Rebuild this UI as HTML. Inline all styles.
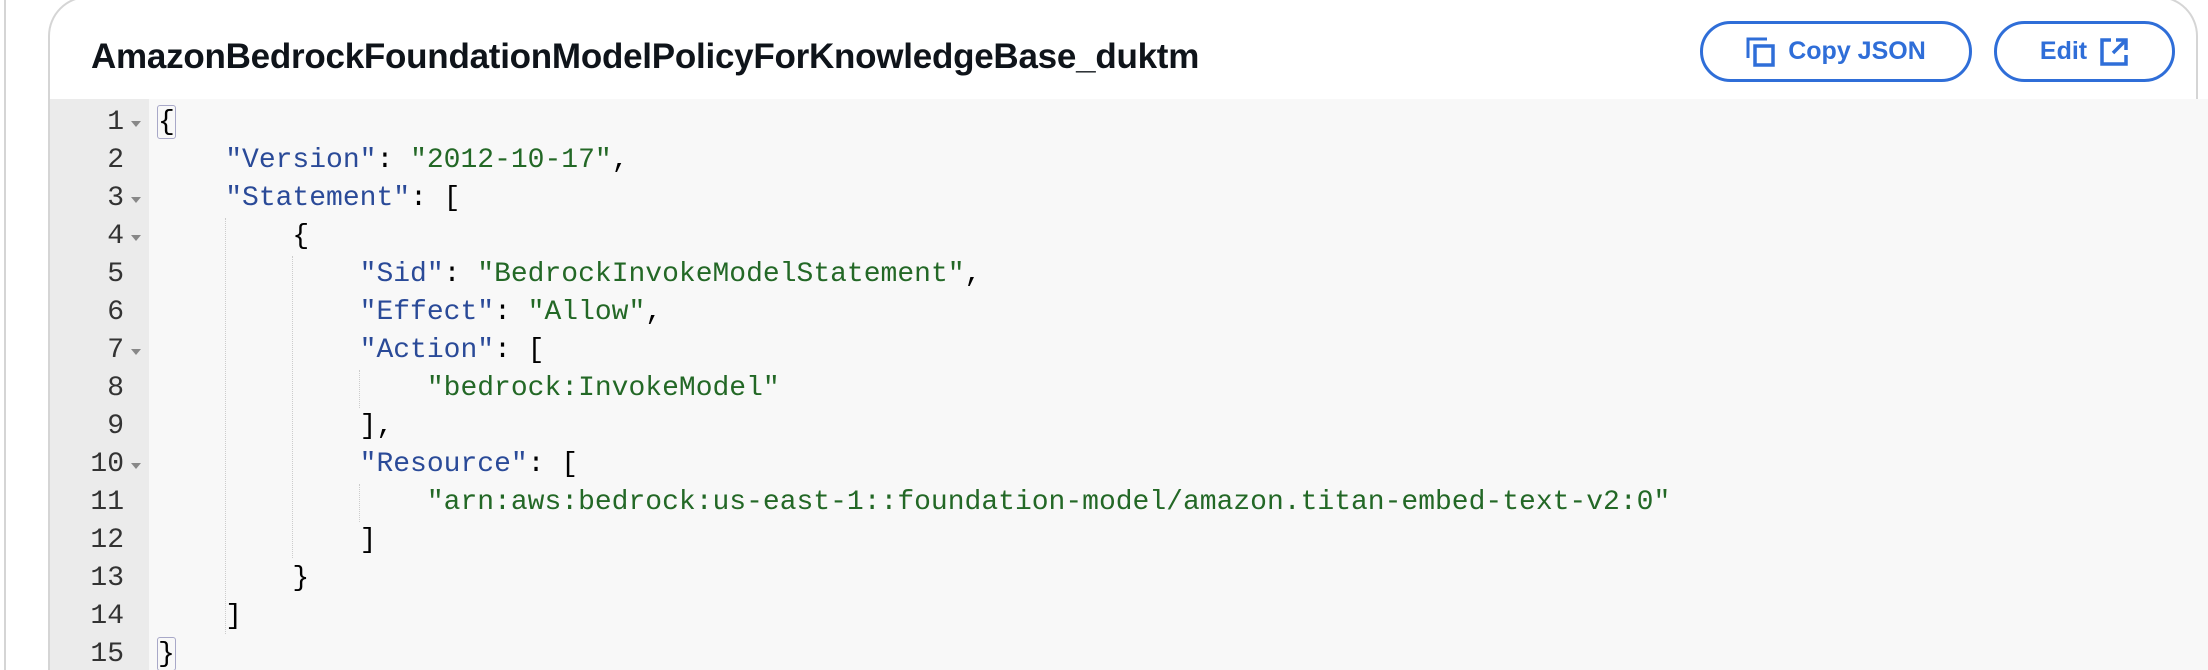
<!DOCTYPE html>
<html style="overflow:hidden;height:670px"><head><meta charset="utf-8"><style>
*{margin:0;padding:0;box-sizing:border-box}
body{width:2208px;height:670px;overflow:hidden;background:#fff;position:relative;font-family:"Liberation Sans",sans-serif}
.vline{position:absolute;left:4px;top:0;width:2px;height:670px;background:#d5d5d5}
.card{position:absolute;left:48px;top:-4px;width:2150px;height:674px;border:2px solid #d5d5d5;border-bottom:none;border-radius:40px 40px 0 0;background:#fff;overflow:hidden}
.title{position:absolute;left:91px;top:37px;font-size:35px;font-weight:bold;color:#0f141a;letter-spacing:-0.25px}
.btn{position:absolute;top:21px;height:61px;border:3px solid #2f6ed8;border-radius:31px;color:#2f6ed8;font-weight:bold;font-size:25px;display:flex;align-items:center;justify-content:center;gap:12px}
.gutter{position:absolute;left:50px;top:99px;width:99px;height:571px;background:#ebebeb}
.editor{position:absolute;left:149px;top:99px;right:0;height:571px;background:#f8f8f8}
.ln{position:absolute;left:50px;width:74px;text-align:right;font-family:"Liberation Mono",monospace;font-size:28px;color:#333;line-height:38px}
.fold{position:absolute;left:131px;width:0;height:0;border-left:5px solid transparent;border-right:5px solid transparent;border-top:6px solid #888}
.code{position:absolute;left:158px;font-family:"Liberation Mono",monospace;font-size:28px;line-height:38px;white-space:pre;color:#000}
.k{color:#2a4a98}.s{color:#236826}
.guide{position:absolute;width:0;border-left:1px dotted #ccc}
.hl{position:absolute;width:19px;height:34px;border:1px solid #a8a8c8;border-radius:3px}
</style></head><body>
<div class="vline"></div>
<div class="card"></div>
<div class="title">AmazonBedrockFoundationModelPolicyForKnowledgeBase_duktm</div>
<div class="btn" style="left:1700px;width:272px">
<svg width="30" height="32" viewBox="0 0 30 32"><path d="M2 22V3h19" fill="none" stroke="#2f6ed8" stroke-width="3"/><rect x="9" y="10" width="18" height="19" fill="none" stroke="#2f6ed8" stroke-width="3.5"/></svg>Copy JSON</div>
<div class="btn" style="left:1994px;width:181px">Edit <svg width="30" height="30" viewBox="0 0 30 30"><path d="M12 3H3v24h24v-9" fill="none" stroke="#2f6ed8" stroke-width="3.5"/><path d="M14 16L26 4M17 3h10v10" fill="none" stroke="#2f6ed8" stroke-width="3.5"/></svg></div>
<div class="gutter"></div>
<div class="editor"></div>
<div class="guide" style="left:225px;top:218px;height:416px"></div>
<div class="guide" style="left:292px;top:256px;height:302px"></div>
<div class="guide" style="left:359px;top:370px;height:38px"></div>
<div class="guide" style="left:359px;top:484px;height:38px"></div>
<div class="hl" style="left:157px;top:105px"></div>
<div class="hl" style="left:157px;top:637px"></div>
<div id="lines"></div>
<script>
var L=[
'{',
'    <span class="k">"Version"</span>: <span class="s">"2012-10-17"</span>,',
'    <span class="k">"Statement"</span>: [',
'        {',
'            <span class="k">"Sid"</span>: <span class="s">"BedrockInvokeModelStatement"</span>,',
'            <span class="k">"Effect"</span>: <span class="s">"Allow"</span>,',
'            <span class="k">"Action"</span>: [',
'                <span class="s">"bedrock:InvokeModel"</span>',
'            ],',
'            <span class="k">"Resource"</span>: [',
'                <span class="s">"arn:aws:bedrock:us-east-1::foundation-model/amazon.titan-embed-text-v2:0"</span>',
'            ]',
'        }',
'    ]',
'}'];
var folds=[1,3,4,7,10],h='';
for(var i=0;i<15;i++){var t=104+38*i;
h+='<div class="ln" style="top:'+t+'px">'+(i+1)+'</div>';
h+='<div class="code" style="top:'+t+'px">'+L[i]+'</div>';
if(folds.indexOf(i+1)>=0)h+='<div class="fold" style="top:'+(t+17)+'px"></div>';}
document.getElementById('lines').innerHTML=h;
</script>
</body></html>
